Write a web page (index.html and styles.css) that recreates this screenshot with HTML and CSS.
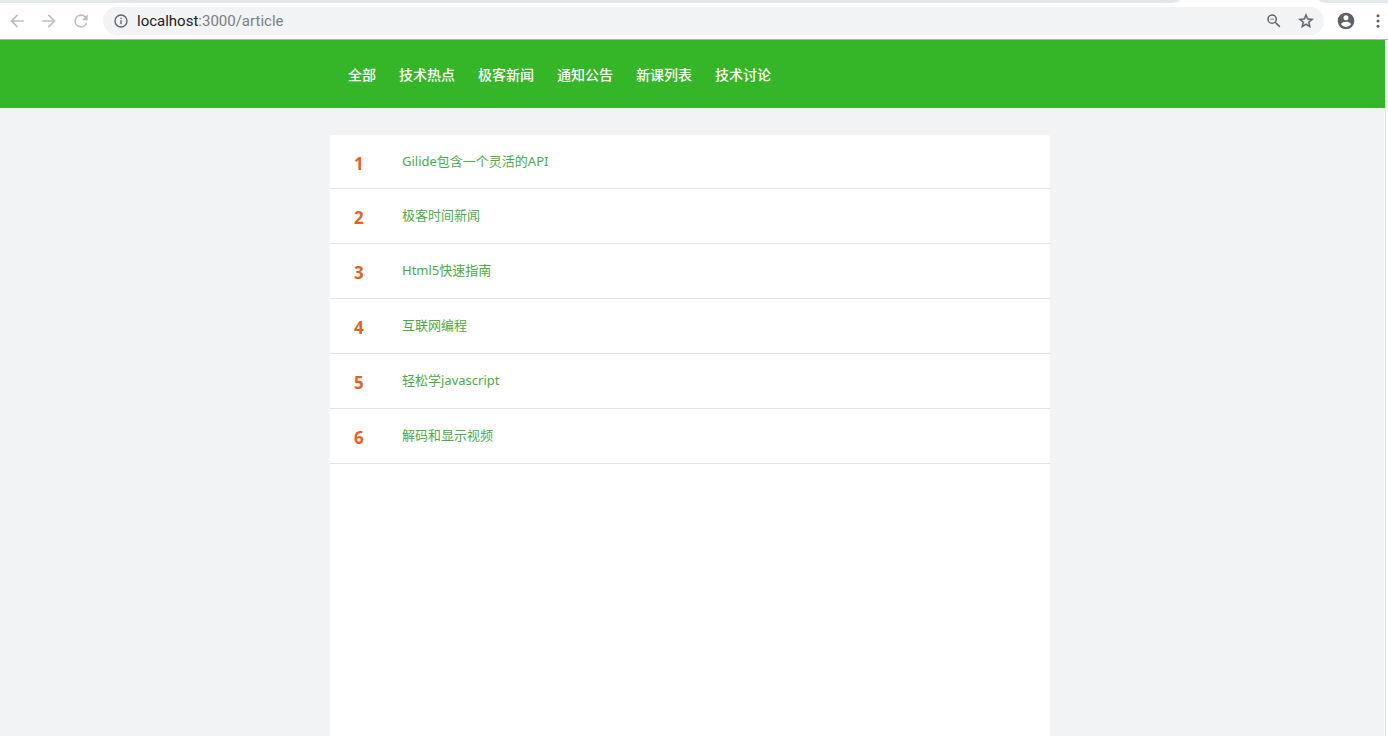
FILE: index.html
```html
<!DOCTYPE html>
<html lang="zh-CN">
<head>
<meta charset="utf-8">
<title>article</title>
<link rel="stylesheet" href="styles.css">
</head>
<body>
<header class="browser">
  <div class="tabstrip"><div class="tab-left"></div><div class="tab-right"></div></div>
  <div class="toolbar">
    <div class="buttons">
      <button class="icon-btn muted" type="button" aria-label="Back"><svg viewBox="0 0 24 24"><path d="M20 11H7.8l5.6-5.6L12 4l-8 8 8 8 1.4-1.4L7.8 13H20z"/></svg></button>
      <button class="icon-btn muted" type="button" aria-label="Forward"><svg viewBox="0 0 24 24"><path d="M12 4l-1.4 1.4 5.6 5.6H4v2h12.2l-5.6 5.6L12 20l8-8z"/></svg></button>
      <button class="icon-btn muted" type="button" aria-label="Reload"><svg viewBox="0 0 24 24"><path d="M17.65 6.35A7.96 7.96 0 0 0 12 4a8 8 0 1 0 7.73 10h-2.08A6 6 0 1 1 12 6c1.66 0 3.14.69 4.22 1.78L13 11h7V4z"/></svg></button>
    </div>
    <div class="address">
      <svg class="info" viewBox="0 0 24 24"><path d="M11 17h2v-6h-2zm1-15a10 10 0 1 0 0 20 10 10 0 0 0 0-20zm0 18a8 8 0 1 1 0-16 8 8 0 0 1 0 16zM11 9h2V7h-2z"/></svg>
      <div class="url"><span class="host">localhost</span>:3000/article</div>
      <button class="icon-btn" type="button" aria-label="Zoom"><svg class="small" viewBox="0 0 24 24"><path d="M15.5 14h-.79l-.28-.27A6.47 6.47 0 0 0 16 9.500 6.500 6.500 0 1 0 9.500 16c1.610 0 3.090-.59 4.230-1.570l.27.280v.79l5 4.990L20.490 19zm-6 0a4.500 4.500 0 1 1 0-9 4.500 4.500 0 0 1 0 9zM7 9h5v1H7z"/></svg></button>
      <button class="icon-btn" type="button" aria-label="Bookmark"><svg class="small bold" viewBox="0 0 24 24"><path d="M22 9.240l-7.190-.62L12 2 9.190 8.630 2 9.240l5.460 4.730L5.820 21 12 17.270 18.180 21l-1.630-7.030zM12 15.400l-3.760 2.270 1-4.280-3.320-2.880 4.380-.38L12 6.100l1.710 4.040 4.380.38-3.320 2.880 1 4.280z"/></svg></button>
    </div>
    <div class="buttons end">
      <button class="icon-btn" type="button" aria-label="Profile"><svg viewBox="0 0 24 24"><path d="M12 2a10 10 0 1 0 0 20 10 10 0 0 0 0-20zm0 3a3 3 0 1 1 0 6 3 3 0 0 1 0-6zm0 14.200a7.200 7.200 0 0 1-6-3.220c.03-1.990 4-3.080 6-3.080s5.970 1.090 6 3.080a7.200 7.200 0 0 1-6 3.220z"/></svg></button>
      <button class="icon-btn" type="button" aria-label="Menu"><svg class="small" viewBox="0 0 24 24"><circle cx="12" cy="5" r="2"/><circle cx="12" cy="12" r="2"/><circle cx="12" cy="19" r="2"/></svg></button>
    </div>
  </div>
</header>
<div class="page">
  <nav class="nav">
    <div class="container nav-items">
      <a href="#">全部</a>
      <a href="#">技术热点</a>
      <a href="#">极客新闻</a>
      <a href="#">通知公告</a>
      <a href="#">新课列表</a>
      <a href="#">技术讨论</a>
    </div>
  </nav>
  <main class="main">
    <ol class="container list">
      <li><span class="num">1</span><a href="#">Gilide包含一个灵活的API</a></li>
      <li><span class="num">2</span><a href="#">极客时间新闻</a></li>
      <li><span class="num">3</span><a href="#">Html5快速指南</a></li>
      <li><span class="num">4</span><a href="#">互联网编程</a></li>
      <li><span class="num">5</span><a href="#">轻松学javascript</a></li>
      <li><span class="num">6</span><a href="#">解码和显示视频</a></li>
    </ol>
  </main>
</div>
</body>
</html>
```
FILE: styles.css
```css
* { box-sizing: border-box; }
body {
  margin: 0;
  min-height: 100vh;
  display: flex;
  flex-direction: column;
  background: #fff;
  font-family: "Noto Sans", "Noto Sans CJK SC", sans-serif;
}
a { text-decoration: none; }

.browser { border-bottom: 1px solid #b4b4b4; }
.tabstrip { display: flex; justify-content: space-between; height: 3px; }
.tab-left { width: 85%; background: #e4e7eb; border-bottom-right-radius: 10px 3px; }
.tab-right { width: 5%; background: #e4e7eb; border-bottom-left-radius: 10px 3px; }
.toolbar { display: flex; align-items: center; height: 36px; padding: 0 0 0 1px; }
.buttons { display: flex; width: 102px; }
.buttons.end { width: 64px; padding-left: 6px; }
.icon-btn {
  display: flex;
  flex: none;
  align-items: center;
  justify-content: center;
  width: 32px;
  height: 28px;
  padding: 0;
  border: 0;
  background: none;
}
svg { width: 20px; height: 20px; fill: #5f6368; }
svg.small { width: 18px; height: 18px; }
svg.bold { stroke: #5f6368; stroke-width: 0.5; }
.muted svg { fill: #bcbec1; }
.address {
  display: flex;
  flex: 1;
  align-items: center;
  height: 28px;
  padding: 0 2px 0 10px;
  border-radius: 14px;
  background: #f1f3f4;
}
.address .info { width: 16px; height: 16px; margin-right: 8px; }
.url {
  flex: 1;
  color: #7b8085;
  font: 15px/20px Roboto, sans-serif;
}
.host { color: #202124; }

.page {
  display: flex;
  flex: 1;
  flex-direction: column;
  margin-right: 2px;
  border-right: 1px solid #e4e4e4;
  background: #f1f3f5;
}
.container { width: 100%; max-width: 720px; margin: 0 auto; }
.nav { padding: 23px 5px 23px 0; background: #34b628; }
.nav-items { display: flex; flex-wrap: wrap; gap: 23px; padding: 0 18px; }
.nav a { color: #fff; font-size: 14px; line-height: 22px; font-weight: 500; font-family: "Noto Sans CJK SC", sans-serif; }
.main { display: flex; flex: 1; padding: 27px 5px 0 0; }
.list { padding: 0; list-style: none; background: #fff; border-radius: 2px 2px 0 0; }
.list li {
  display: flex;
  align-items: flex-start;
  padding: 15px 24px 17px;
  border-bottom: 1px solid #e2e3e5;
}
.list li:first-child { padding-bottom: 16px; }
.num {
  width: 48px;
  padding-top: 5px;
  color: #e8601c;
  font-size: 17px;
  line-height: 17px;
  font-weight: 700;
}
.list a { color: #4bab46; font-size: 13px; line-height: 22px; }
```
